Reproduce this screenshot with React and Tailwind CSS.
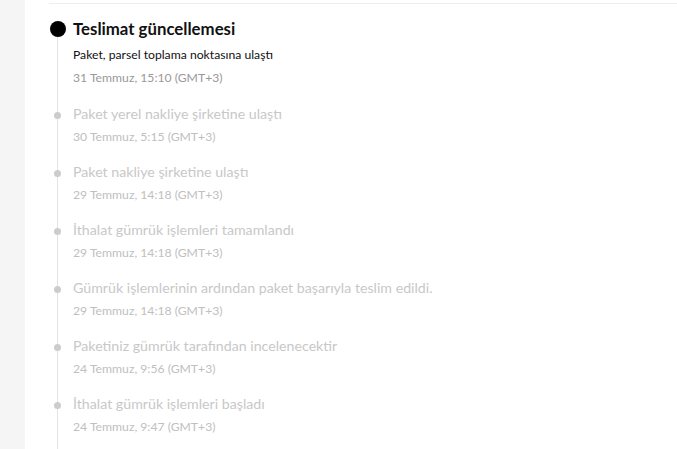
import React from "react";

const items = [
  { t: "Paket yerel nakliye şirketine ulaştı", d: "30 Temmuz, 5:15 (GMT+3)" },
  { t: "Paket nakliye şirketine ulaştı", d: "29 Temmuz, 14:18 (GMT+3)" },
  { t: "İthalat gümrük işlemleri tamamlandı", d: "29 Temmuz, 14:18 (GMT+3)" },
  { t: "Gümrük işlemlerinin ardından paket başarıyla teslim edildi.", d: "29 Temmuz, 14:18 (GMT+3)" },
  { t: "Paketiniz gümrük tarafından incelenecektir", d: "24 Temmuz, 9:56 (GMT+3)" },
  { t: "İthalat gümrük işlemleri başladı", d: "24 Temmuz, 9:47 (GMT+3)" },
];

export default function App() {
  return (
    <div className="flex h-[449px] w-[677px] overflow-hidden bg-[#f5f5f5] font-['Lato',sans-serif]">
      <div className="w-[25px] shrink-0" />
      <div className="flex flex-1 flex-col bg-white pl-[24px]">
        <div className="mt-[3px] border-t border-[#eeeeee]" />
        <div className="flex flex-col pt-[17px]">
          <div className="flex">
            <div className="flex w-[17px] shrink-0 flex-col items-center">
              <div className="h-[16px] w-[16px] rounded-full bg-black" />
              <div className="w-px flex-1 bg-[#e3e3e3]" />
            </div>
            <div className="flex flex-col pb-[17px] pl-[7px]">
              <div className="h-[16px] text-[16.8px] font-bold leading-[16px] text-[#111]">Teslimat güncellemesi</div>
              <div className="mt-[9px] h-[18px] text-[12.2px] leading-[18px] text-[#111]">Paket, parsel toplama noktasına ulaştı</div>
              <div className="mt-[5px] h-[18px] text-[12.2px] leading-[18px] text-[#999]">31 Temmuz, 15:10 (GMT+3)</div>
            </div>
          </div>
          {items.map((it, i) => (
            <div key={i} className="flex">
              <div className="flex w-[17px] shrink-0 flex-col items-center">
                <div className="h-[8px] w-px bg-[#e3e3e3]" />
                <div className="h-[7px] w-[7px] rounded-full bg-[#cccccc]" />
                <div className="w-px flex-1 bg-[#e3e3e3]" />
              </div>
              <div className="flex flex-col pb-[15px] pl-[7px]">
                <div className="h-[20px] text-[14.2px] leading-[20px] text-[#c8c8c8]">{it.t}</div>
                <div className="mt-[3px] h-[20px] text-[12.2px] leading-[20px] text-[#c0c0c0]">{it.d}</div>
              </div>
            </div>
          ))}
        </div>
      </div>
    </div>
  );
}
